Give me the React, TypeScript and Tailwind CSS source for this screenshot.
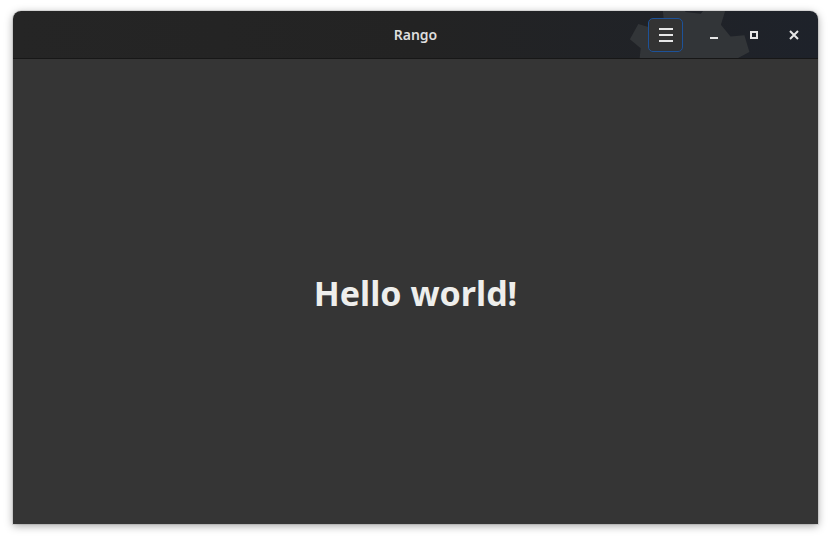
import React from "react";

function Gear() {
  // faint cog watermark behind the header buttons
  const teeth = 8;
  const cx = 675;
  const cy = 50;
  const rOuter = 62;
  const rInner = 49;
  const pts: string[] = [];
  const step = (Math.PI * 2) / teeth;
  for (let i = 0; i < teeth; i++) {
    const a = i * step + 0.5;
    const seq = [
      [rInner, a - step * 0.3],
      [rOuter, a - step * 0.18],
      [rOuter, a + step * 0.18],
      [rInner, a + step * 0.3],
    ];
    for (const [r, t] of seq) {
      pts.push(`${(cx + r * Math.cos(t)).toFixed(1)},${(cy + r * Math.sin(t)).toFixed(1)}`);
    }
  }
  return (
    <svg className="absolute left-0 top-0" width="805" height="47" viewBox="0 0 805 47">
      <polygon points={pts.join(" ")} fill="#323538" />
    </svg>
  );
}

export default function App() {
  return (
    <div className="w-[831px] h-[540px] bg-white pl-[13px] pt-[11px]">
      <div className="w-[805px] h-[513px] flex flex-col rounded-t-[8px] overflow-hidden shadow-[0_2px_8px_rgba(0,0,0,0.35),0_0_0_1px_rgba(0,0,0,0.08)]">
        <header className="relative h-[48px] shrink-0 bg-gradient-to-r from-[#252525] via-[#232323] to-[#1e222a] border-b border-[#171717]">
          <Gear />
          <div className="relative h-full flex items-center justify-center">
            <span className="text-[14px] font-semibold text-[#dedede] font-['Noto_Sans',sans-serif]">Rango</span>
          </div>
          <div className="absolute right-0 top-0 h-full flex items-center">
            <button className="w-[35px] h-[34px] mr-[11px] rounded-[5px] border border-[#1d5299] bg-[#333333] flex flex-col items-center justify-center gap-[4px]">
              <span className="block w-[14px] h-[2px] bg-[#e6e6e6]" />
              <span className="block w-[14px] h-[2px] bg-[#e6e6e6]" />
              <span className="block w-[14px] h-[2px] bg-[#e6e6e6]" />
            </button>
            <div className="w-[40px] flex justify-center">
              <span className="block w-[8px] h-[2px] bg-[#e6e6e6] mt-[7px]" />
            </div>
            <div className="w-[40px] flex justify-center">
              <span className="block w-[8px] h-[8px] border-2 border-[#e6e6e6]" />
            </div>
            <div className="w-[40px] flex justify-center mr-[4px]">
              <svg width="10" height="10" viewBox="0 0 10 10">
                <path d="M1 1 L9 9 M9 1 L1 9" stroke="#e6e6e6" strokeWidth="2" />
              </svg>
            </div>
          </div>
        </header>
        <main className="flex-1 bg-[#353535] flex items-center justify-center">
          <h1 className="text-[34px] font-bold text-[#eeeeec] font-['Noto_Sans',sans-serif] mt-[4px]">Hello world!</h1>
        </main>
      </div>
    </div>
  );
}
